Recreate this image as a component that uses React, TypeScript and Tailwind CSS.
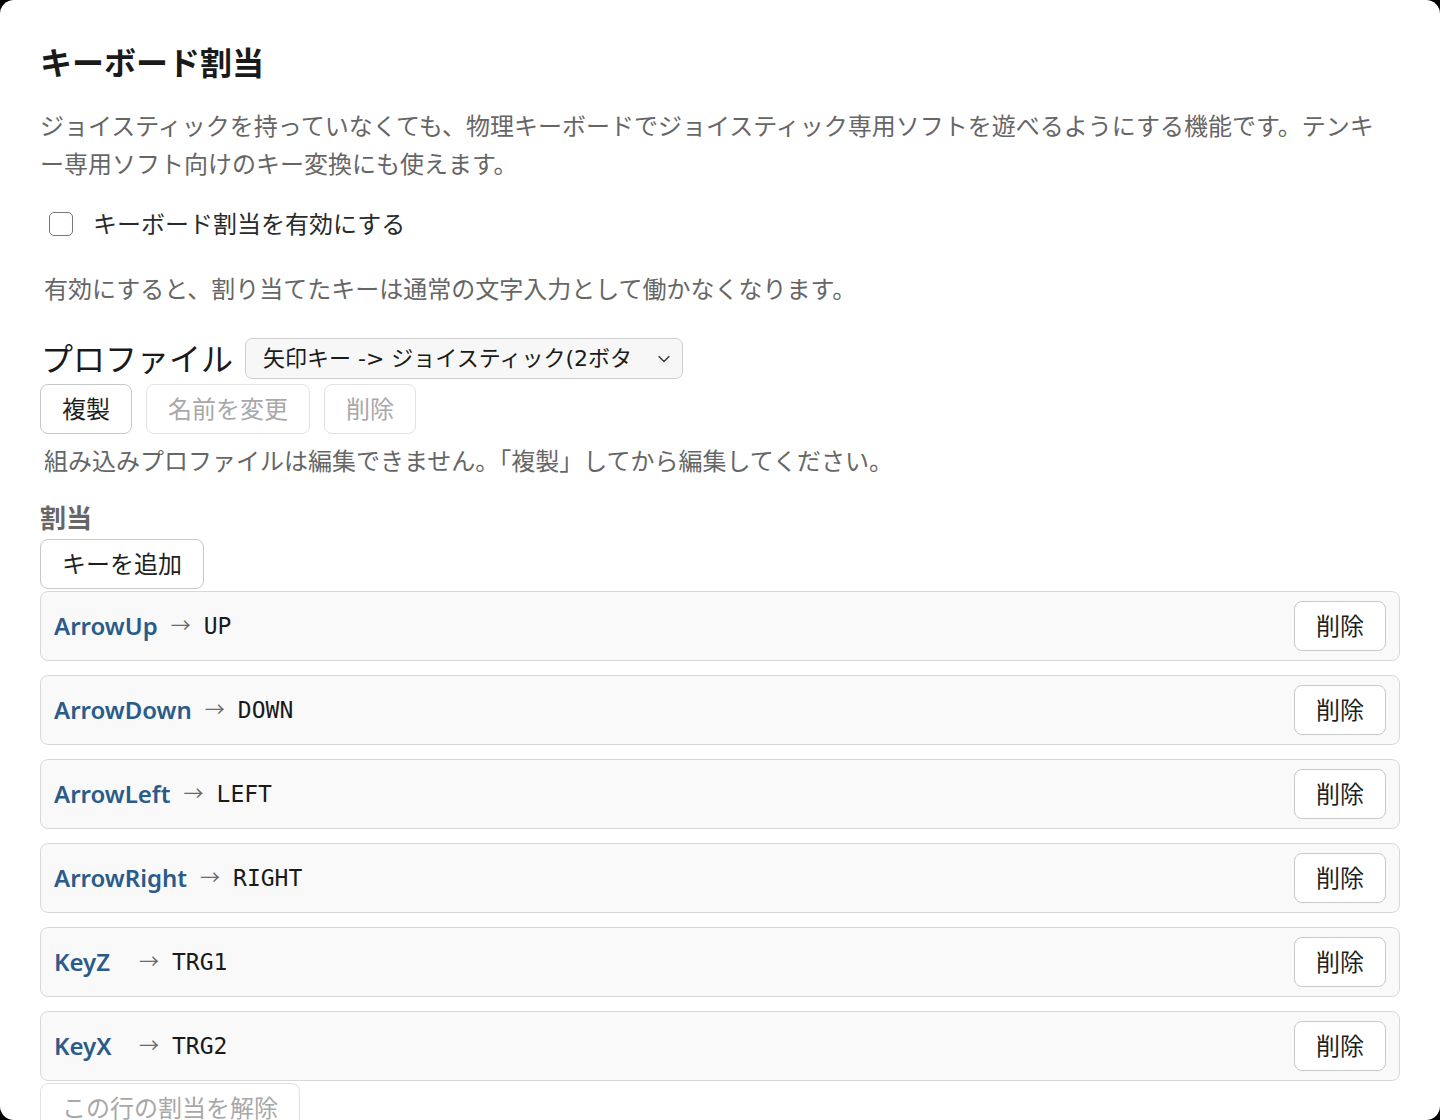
import { ChevronDown } from 'lucide-react'

type Binding = {
  key: string
  target: string
}

const bindings: Binding[] = [
  { key: 'ArrowUp', target: 'UP' },
  { key: 'ArrowDown', target: 'DOWN' },
  { key: 'ArrowLeft', target: 'LEFT' },
  { key: 'ArrowRight', target: 'RIGHT' },
  { key: 'KeyZ', target: 'TRG1' },
  { key: 'KeyX', target: 'TRG2' },
]

const font = "font-['Noto_Sans','Noto_Sans_CJK_JP',sans-serif]"

function Button({ children, disabled = false }: { children: React.ReactNode; disabled?: boolean }) {
  return (
    <button
      disabled={disabled}
      className={
        disabled
          ? 'h-[50px] px-[21px] rounded-[8px] border-[1.5px] border-[#e2e2e2] bg-white text-[24px] leading-none text-[#a8a8a8]'
          : 'h-[50px] px-[21px] rounded-[8px] border-[1.5px] border-[#c8c8c8] bg-white text-[24px] leading-none text-[#1f1f1f]'
      }
    >
      {children}
    </button>
  )
}

function BindingRow({ binding }: { binding: Binding }) {
  return (
    <div className="h-[70px] flex items-center justify-between rounded-[8px] border-[1.5px] border-[#d8d8d8] bg-[#f9f9f9] pl-[13px] pr-[13px]">
      <div className="flex items-center gap-[13px]">
        <span className="min-w-[72px] text-[24px] font-semibold text-[#2b5b8a]">{binding.key}</span>
        <span className="text-[20px] text-[#6a6a6a]">→</span>
        <span className="font-['DejaVu_Sans_Mono',monospace] text-[23px] text-[#1a1a1a]">{binding.target}</span>
      </div>
      <Button>削除</Button>
    </div>
  )
}

export default function App() {
  return (
    <div className={`bg-black ${font}`}>
      <div className="h-[1120px] overflow-hidden rounded-[14px] bg-white px-[40px] pt-[43px]">
        <h1 className="text-[32px] leading-[40px] font-bold text-[#1a1a1a]">キーボード割当</h1>

        <p className="mt-[24px] max-w-[1340px] text-[24px] leading-[38px] text-[#666]">
          ジョイスティックを持っていなくても、物理キーボードでジョイスティック専用ソフトを遊べるようにする機能です。テンキー専用ソフト向けのキー変換にも使えます。
        </p>

        {/* enable toggle */}
        <label className="mt-[22px] flex h-[38px] items-center gap-[20px] pl-[9px]">
          <span className="h-[24px] w-[24px] rounded-[5px] border-[1.5px] border-[#777] bg-white" />
          <span className="text-[24px] text-[#2a2a2a]">キーボード割当を有効にする</span>
        </label>

        <p className="mt-[27px] pl-[4px] text-[24px] leading-[38px] text-[#666]">
          有効にすると、割り当てたキーは通常の文字入力として働かなくなります。
        </p>

        {/* profile picker */}
        <div className="mt-[30px] flex items-center gap-[12px] pl-[1px]">
          <span className="text-[32px] leading-[40px] text-[#1a1a1a]">プロファイル</span>
          <div className="flex h-[41px] w-[438px] items-center rounded-[7px] border-[1.5px] border-[#cfcfcf] bg-[#f7f7f7] pl-[17px] pr-[8px]">
            <span className="w-[368px] overflow-hidden whitespace-nowrap font-['DejaVu_Sans','Noto_Sans_CJK_JP',sans-serif] text-[22px] text-[#1a1a1a]">
              矢印キー -&gt; ジョイスティック(2ボタン)
            </span>
            <ChevronDown className="ml-auto h-[20px] w-[20px] text-[#333]" strokeWidth={1.6} />
          </div>
        </div>

        <div className="mt-[5px] flex gap-[14px]">
          <Button>複製</Button>
          <Button disabled>名前を変更</Button>
          <Button disabled>削除</Button>
        </div>

        <p className="mt-[8px] pl-[4px] text-[24px] leading-[38px] text-[#666]">
          組み込みプロファイルは編集できません。「複製」してから編集してください。
        </p>

        <h2 className="mt-[21px] text-[26px] leading-[34px] font-semibold text-[#666]">割当</h2>

        <div className="mt-[4px]">
          <Button>キーを追加</Button>
        </div>

        <div className="mt-[2px] flex flex-col gap-[14px]">
          {bindings.map((b) => (
            <BindingRow key={b.key} binding={b} />
          ))}
        </div>

        <div className="mt-[2px]">
          <Button disabled>この行の割当を解除</Button>
        </div>
      </div>
    </div>
  )
}
